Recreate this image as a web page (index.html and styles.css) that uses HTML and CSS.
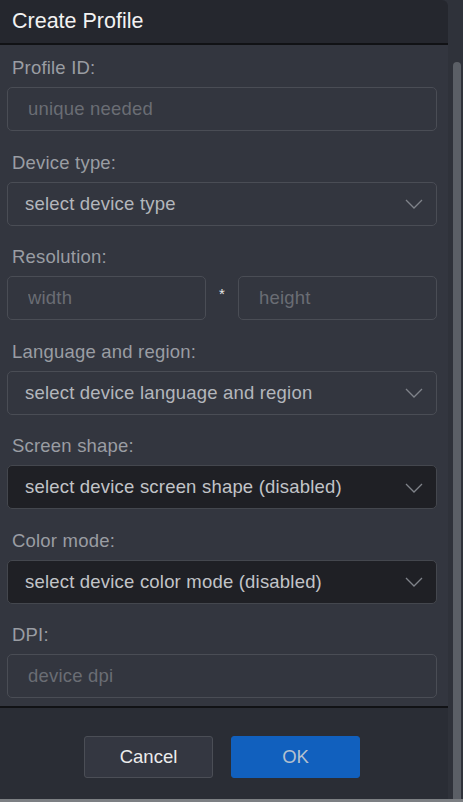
FILE: index.html
```html
<!DOCTYPE html>
<html lang="en">
<head>
<meta charset="utf-8">
<title>Create Profile</title>
<link rel="stylesheet" href="styles.css">
</head>
<body>
<div class="app">
  <div class="dialog">
    <div class="header">Create Profile</div>
    <div class="content">
      <div class="field">
        <div class="label">Profile ID:</div>
        <input class="control" type="text" placeholder="unique needed">
      </div>
      <div class="field">
        <div class="label">Device type:</div>
        <div class="control select"><span>select device type</span>
          <svg class="chev" width="18" height="10" viewBox="0 0 18 10"><path d="M1 1 L9 9 L17 1" fill="none" stroke="#7f838a" stroke-width="1.3"/></svg>
        </div>
      </div>
      <div class="field">
        <div class="label">Resolution:</div>
        <div class="res">
          <input class="control" type="text" placeholder="width">
          <span class="star">*</span>
          <input class="control" type="text" placeholder="height">
        </div>
      </div>
      <div class="field">
        <div class="label">Language and region:</div>
        <div class="control select"><span>select device language and region</span>
          <svg class="chev" width="18" height="10" viewBox="0 0 18 10"><path d="M1 1 L9 9 L17 1" fill="none" stroke="#7f838a" stroke-width="1.3"/></svg>
        </div>
      </div>
      <div class="field">
        <div class="label">Screen shape:</div>
        <div class="control select disabled"><span>select device screen shape (disabled)</span>
          <svg class="chev" width="18" height="10" viewBox="0 0 18 10"><path d="M1 1 L9 9 L17 1" fill="none" stroke="#7f838a" stroke-width="1.3"/></svg>
        </div>
      </div>
      <div class="field">
        <div class="label">Color mode:</div>
        <div class="control select disabled"><span>select device color mode (disabled)</span>
          <svg class="chev" width="18" height="10" viewBox="0 0 18 10"><path d="M1 1 L9 9 L17 1" fill="none" stroke="#7f838a" stroke-width="1.3"/></svg>
        </div>
      </div>
      <div class="field">
        <div class="label">DPI:</div>
        <input class="control" type="text" placeholder="device dpi">
      </div>
    </div>
    <div class="footer">
      <button class="btn cancel">Cancel</button>
      <button class="btn ok">OK</button>
    </div>
  </div>
  <div class="track"><div class="thumb"></div></div>
</div>
<div class="strip"></div>
</body>
</html>
```
FILE: styles.css
```css
* { box-sizing: border-box; }
html, body { margin: 0; padding: 0; }
body {
  width: 463px;
  height: 802px;
  overflow: hidden;
  background: #2f323a;
  font-family: "Liberation Sans", Arial, sans-serif;
}
.app {
  display: flex;
  height: 799px;
}
.dialog {
  width: 448px;
  display: flex;
  flex-direction: column;
  background: #33363f;
  border-top-right-radius: 6px;
  overflow: hidden;
}
.header {
  height: 45px;
  flex: none;
  background: #25272e;
  border-bottom: 2px solid #111215;
  color: #f2f2f2;
  font-size: 21.5px;
  padding-left: 12px;
  line-height: 43px;
}
.content {
  flex: 1;
  display: flex;
  flex-direction: column;
  gap: 20.5px;
  padding: 12px 11px 0 7px;
  border-bottom: 2px solid #111215;
  overflow: hidden;
}
.field {
  display: flex;
  flex-direction: column;
  gap: 8px;
}
.label {
  font-size: 18.5px;
  letter-spacing: 0.2px;
  line-height: 22px;
  color: #9a9da3;
  padding-left: 5px;
}
.control {
  height: 44px;
  width: 100%;
  border: 1px solid #4a4d55;
  border-radius: 5px;
  background: transparent;
  font-family: "Liberation Sans", Arial, sans-serif;
  font-size: 18.5px;
  letter-spacing: 0.2px;
  color: #b3b6bc;
  padding: 0 0 0 20px;
  outline: none;
}
input.control::placeholder { color: #6a6d74; }
.select {
  display: flex;
  align-items: center;
  justify-content: space-between;
  padding-left: 17px;
  padding-right: 13px;
}
.chev { margin-top: 1px; }
.select.disabled {
  background: #1f2025;
  border-color: #44474e;
  color: #c2c4c8;
}
.res {
  display: grid;
  grid-template-columns: 1fr 32px 1fr;
  align-items: center;
}
.star {
  color: #e6e6e6;
  font-size: 15px;
  text-align: center;
  padding-bottom: 9px;
}
.footer {
  height: 91px;
  flex: none;
  background: #2a2d35;
  display: flex;
  justify-content: center;
  gap: 18px;
  padding-top: 28px;
  padding-right: 4px;
}
.btn {
  width: 129px;
  height: 42px;
  font-family: "Liberation Sans", Arial, sans-serif;
  font-size: 18.5px;
  border-radius: 3px;
  cursor: pointer;
}
.cancel {
  background: #343741;
  border: 1px solid #4b4e56;
  color: #ececec;
}
.ok {
  background: #1160be;
  border: 1px solid #1160be;
  color: #b4c0cf;
}
.track {
  flex: 1;
  position: relative;
  background: #2f323a;
}
.thumb {
  position: absolute;
  left: 5px;
  width: 8px;
  top: 62px;
  bottom: 0;
  background: #5b5f66;
  border-radius: 4px 4px 0 0;
}
.strip {
  height: 3px;
  background: #7c7f83;
}
```
